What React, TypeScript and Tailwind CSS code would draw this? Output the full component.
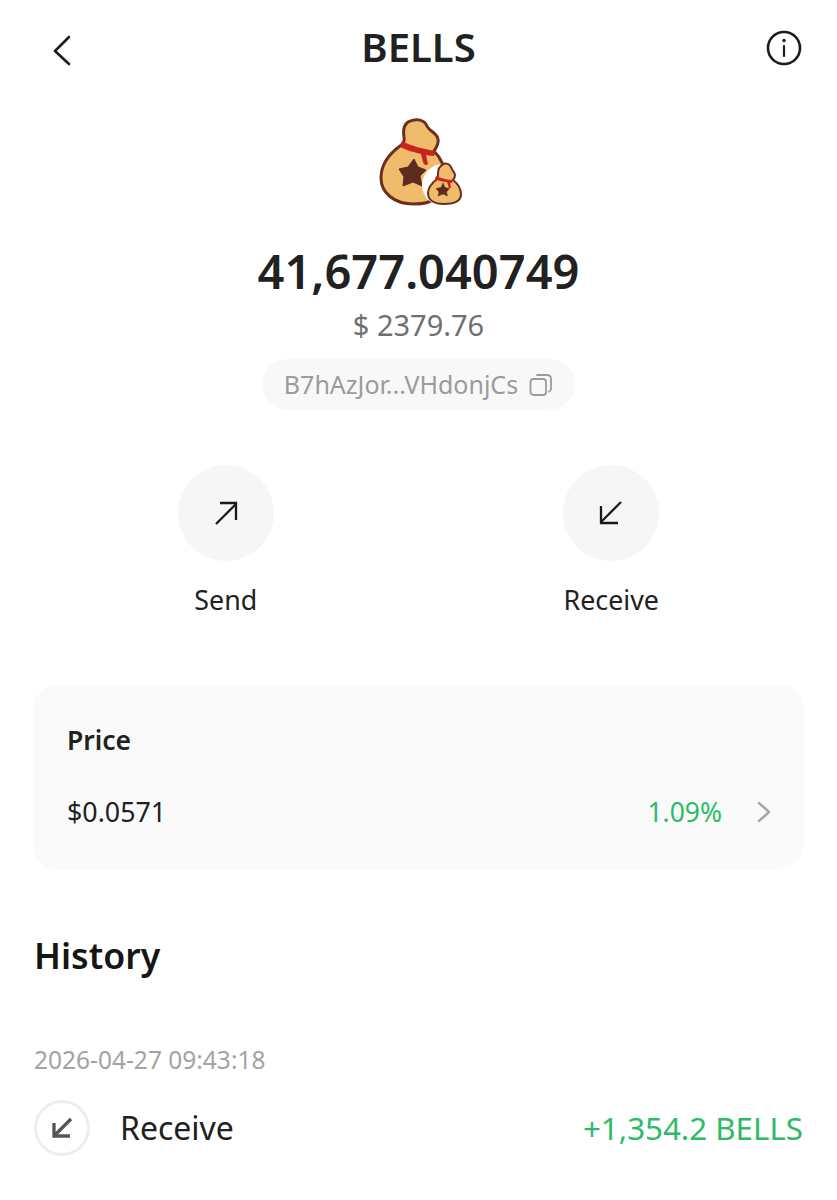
const font = { fontFamily: '"Noto Sans", sans-serif' };

function BagLogo() {
  return (
    <svg width="84" height="90" viewBox="0 0 84 90" fill="none">
      <path d="M29 4 C36 0 45 1 48 8 C50 13 58 15 59 21 C60 26 57 30 55 33 C62 40 66 50 67 60 C68 76 56 86 35 86 C14 86 2 74 2 60 C2 46 10 36 21 28 C24 26 26 24 25 19 C24 13 25 7 29 4 Z" fill="#f0bc6b" stroke="#6b2f1e" strokeWidth="3" />
      <path d="M23 23 C32 28 44 31 57 33 L55 38 C51 38 48 37 47 37 L49 46 C47 48 45 47 44 44 L42 36 C34 34 27 32 21 29 Z" fill="#c9231d" />
      <path d="M35 41 L39 49 L47 52 L41 58 L43 68 L34 64 L24 68 L25 59 L20 51 L29 49 Z" fill="#5f2a20" stroke="#5f2a20" strokeWidth="1" strokeLinejoin="round" />
      <circle cx="64" cy="67" r="21" fill="#ffffff" />
      <g transform="translate(1 0)">
        <path d="M60 49 C64 44 69 45 71 49 C72 53 75 54 75 57 C75 60 74 61 73 62 C78 66 81 70 81 76 C81 83 75 86 64 86 C54 86 48 82 48 75 C48 69 52 65 57 61 C58 60 58 58 58 56 C58 53 58 51 60 49 Z" fill="#f0bc6b" stroke="#6b2f1e" strokeWidth="2" />
        <path d="M56 58 C61 60 67 62 73 62 L72 65 L70 65 L71 70 L69 70 L67 64 C63 64 59 63 55 61 Z" fill="#c9231d" />
        <path d="M63 65 L65 69.500 L69.500 70.500 L66.500 74 L67.500 78 L63 76 L58 78 L59 74 L56 70.500 L61 69.500 Z" fill="#5f2a20" stroke="#5f2a20" strokeWidth="0.5" strokeLinejoin="round" />
      </g>
    </svg>
  );
}

export default function App() {
  return (
    <div style={font} className="h-[1200px] w-[837px] overflow-hidden bg-white text-[#212121]">
      <header className="flex h-[96px] items-center justify-between px-[35px]">
        <div className="flex-1">
          <svg className="ml-[15px] mt-[4px]" width="24" height="32" viewBox="0 0 24 32" fill="none" stroke="#1c1c1c" strokeWidth="2.6" strokeLinecap="round" strokeLinejoin="round">
            <path d="M19 3 L5 17 L19 30" />
          </svg>
        </div>
        <h1 className="mb-[3px] text-[40px] font-semibold leading-none">BELLS</h1>
        <div className="flex flex-1 justify-end">
          <svg width="36" height="36" viewBox="0 0 36 36" fill="none" stroke="#1c1c1c">
            <circle cx="18" cy="18" r="16" strokeWidth="2.6" />
            <path d="M18 16 V26" strokeWidth="2.2" strokeLinecap="round" />
            <circle cx="18" cy="10.500" r="1.700" fill="#1c1c1c" stroke="none" />
          </svg>
        </div>
      </header>

      <div className="flex flex-col items-center">
        <div className="ml-[4px] mt-[22px] h-[90px]">
          <BagLogo />
        </div>
        <div className="mt-[31px] text-[47px] font-semibold leading-[64px]">41,677.040749</div>
        <div className="mt-[4px] text-[29px] leading-[36px] text-[#6f6f6f]">$ 2379.76</div>
        <div className="mt-[16px] flex h-[51px] w-[313px] items-center justify-center gap-[11px] rounded-full bg-[#f8f8f8] text-[25px] text-[#9b9b9b]">
          <span>B7hAzJor...VHdonjCs</span>
          <svg width="24" height="24" viewBox="0 0 24 24" fill="none" stroke="#9b9b9b" strokeWidth="1.800">
            <rect x="1.500" y="6" width="15.500" height="16" rx="3" />
            <path d="M8 2 H18 C20.500 2 22 3.500 22 6 V16 C22 17.500 21 18 20 18.500" strokeLinecap="round" />
          </svg>
        </div>
      </div>

      <div className="mt-[55px] grid grid-cols-2 px-[33px]">
        <div className="flex flex-col items-center">
          <div className="flex h-[96px] w-[96px] items-center justify-center rounded-full bg-[#f6f6f6]">
            <svg width="28" height="28" viewBox="0 0 28 28" fill="none" stroke="#1a1a1a" strokeWidth="2.300">
              <path d="M4 25 L24 5" />
              <path d="M8 4 H24 V21" />
            </svg>
          </div>
          <span className="mt-[21px] text-[26.800px] leading-[36px]">Send</span>
        </div>
        <div className="flex flex-col items-center">
          <div className="flex h-[96px] w-[96px] items-center justify-center rounded-full bg-[#f6f6f6]">
            <svg width="28" height="28" viewBox="0 0 28 28" fill="none" stroke="#1a1a1a" strokeWidth="2.300">
              <path d="M24 3 L4 23" />
              <path d="M4 7 V24 H21" />
            </svg>
          </div>
          <span className="mt-[21px] text-[26.800px] leading-[36px]">Receive</span>
        </div>
      </div>

      <section className="mx-[33px] mt-[67px] h-[184px] rounded-[24px] bg-[#fafafa] pl-[34px] pr-[32px] pt-[37px]">
        <div className="text-[26.5px] font-semibold leading-[36px]">Price</div>
        <div className="mt-[36px] flex items-center justify-between">
          <span className="text-[26.800px] leading-[36px]">$0.0571</span>
          <div className="flex items-center gap-[34px]">
            <span className="text-[26.500px] leading-[36px] text-[#2dbb68]">1.09%</span>
            <svg width="16" height="24" viewBox="0 0 16 24" fill="none" stroke="#a5a5a5" strokeWidth="2.400" strokeLinecap="round" strokeLinejoin="round">
              <path d="M3 3 L13 12 L3 21" />
            </svg>
          </div>
        </div>
      </section>

      <section className="px-[34px]">
        <h2 className="mt-[60px] text-[35.700px] font-semibold leading-[52px] text-[#161616]">History</h2>
        <div className="mt-[62px] text-[24.5px] leading-[34px] text-[#a3a3a3]">2026-04-27 09:43:18</div>
        <div className="mt-[23px] flex items-center justify-between">
          <div className="flex items-center gap-[30px]">
            <div className="flex h-[56px] w-[56px] items-center justify-center rounded-full border-[3px] border-[#eeeeee]">
              <svg width="22" height="22" viewBox="0 0 22 22" fill="none" stroke="#555555" strokeWidth="3.300">
                <path d="M20 2 L4 18" />
                <path d="M3 6 V19 H19" />
              </svg>
            </div>
            <span className="text-[32px] leading-[44px]">Receive</span>
          </div>
          <span className="text-[31.300px] leading-[44px] text-[#2dbb68]">+1,354.2 BELLS</span>
        </div>
      </section>
    </div>
  );
}
